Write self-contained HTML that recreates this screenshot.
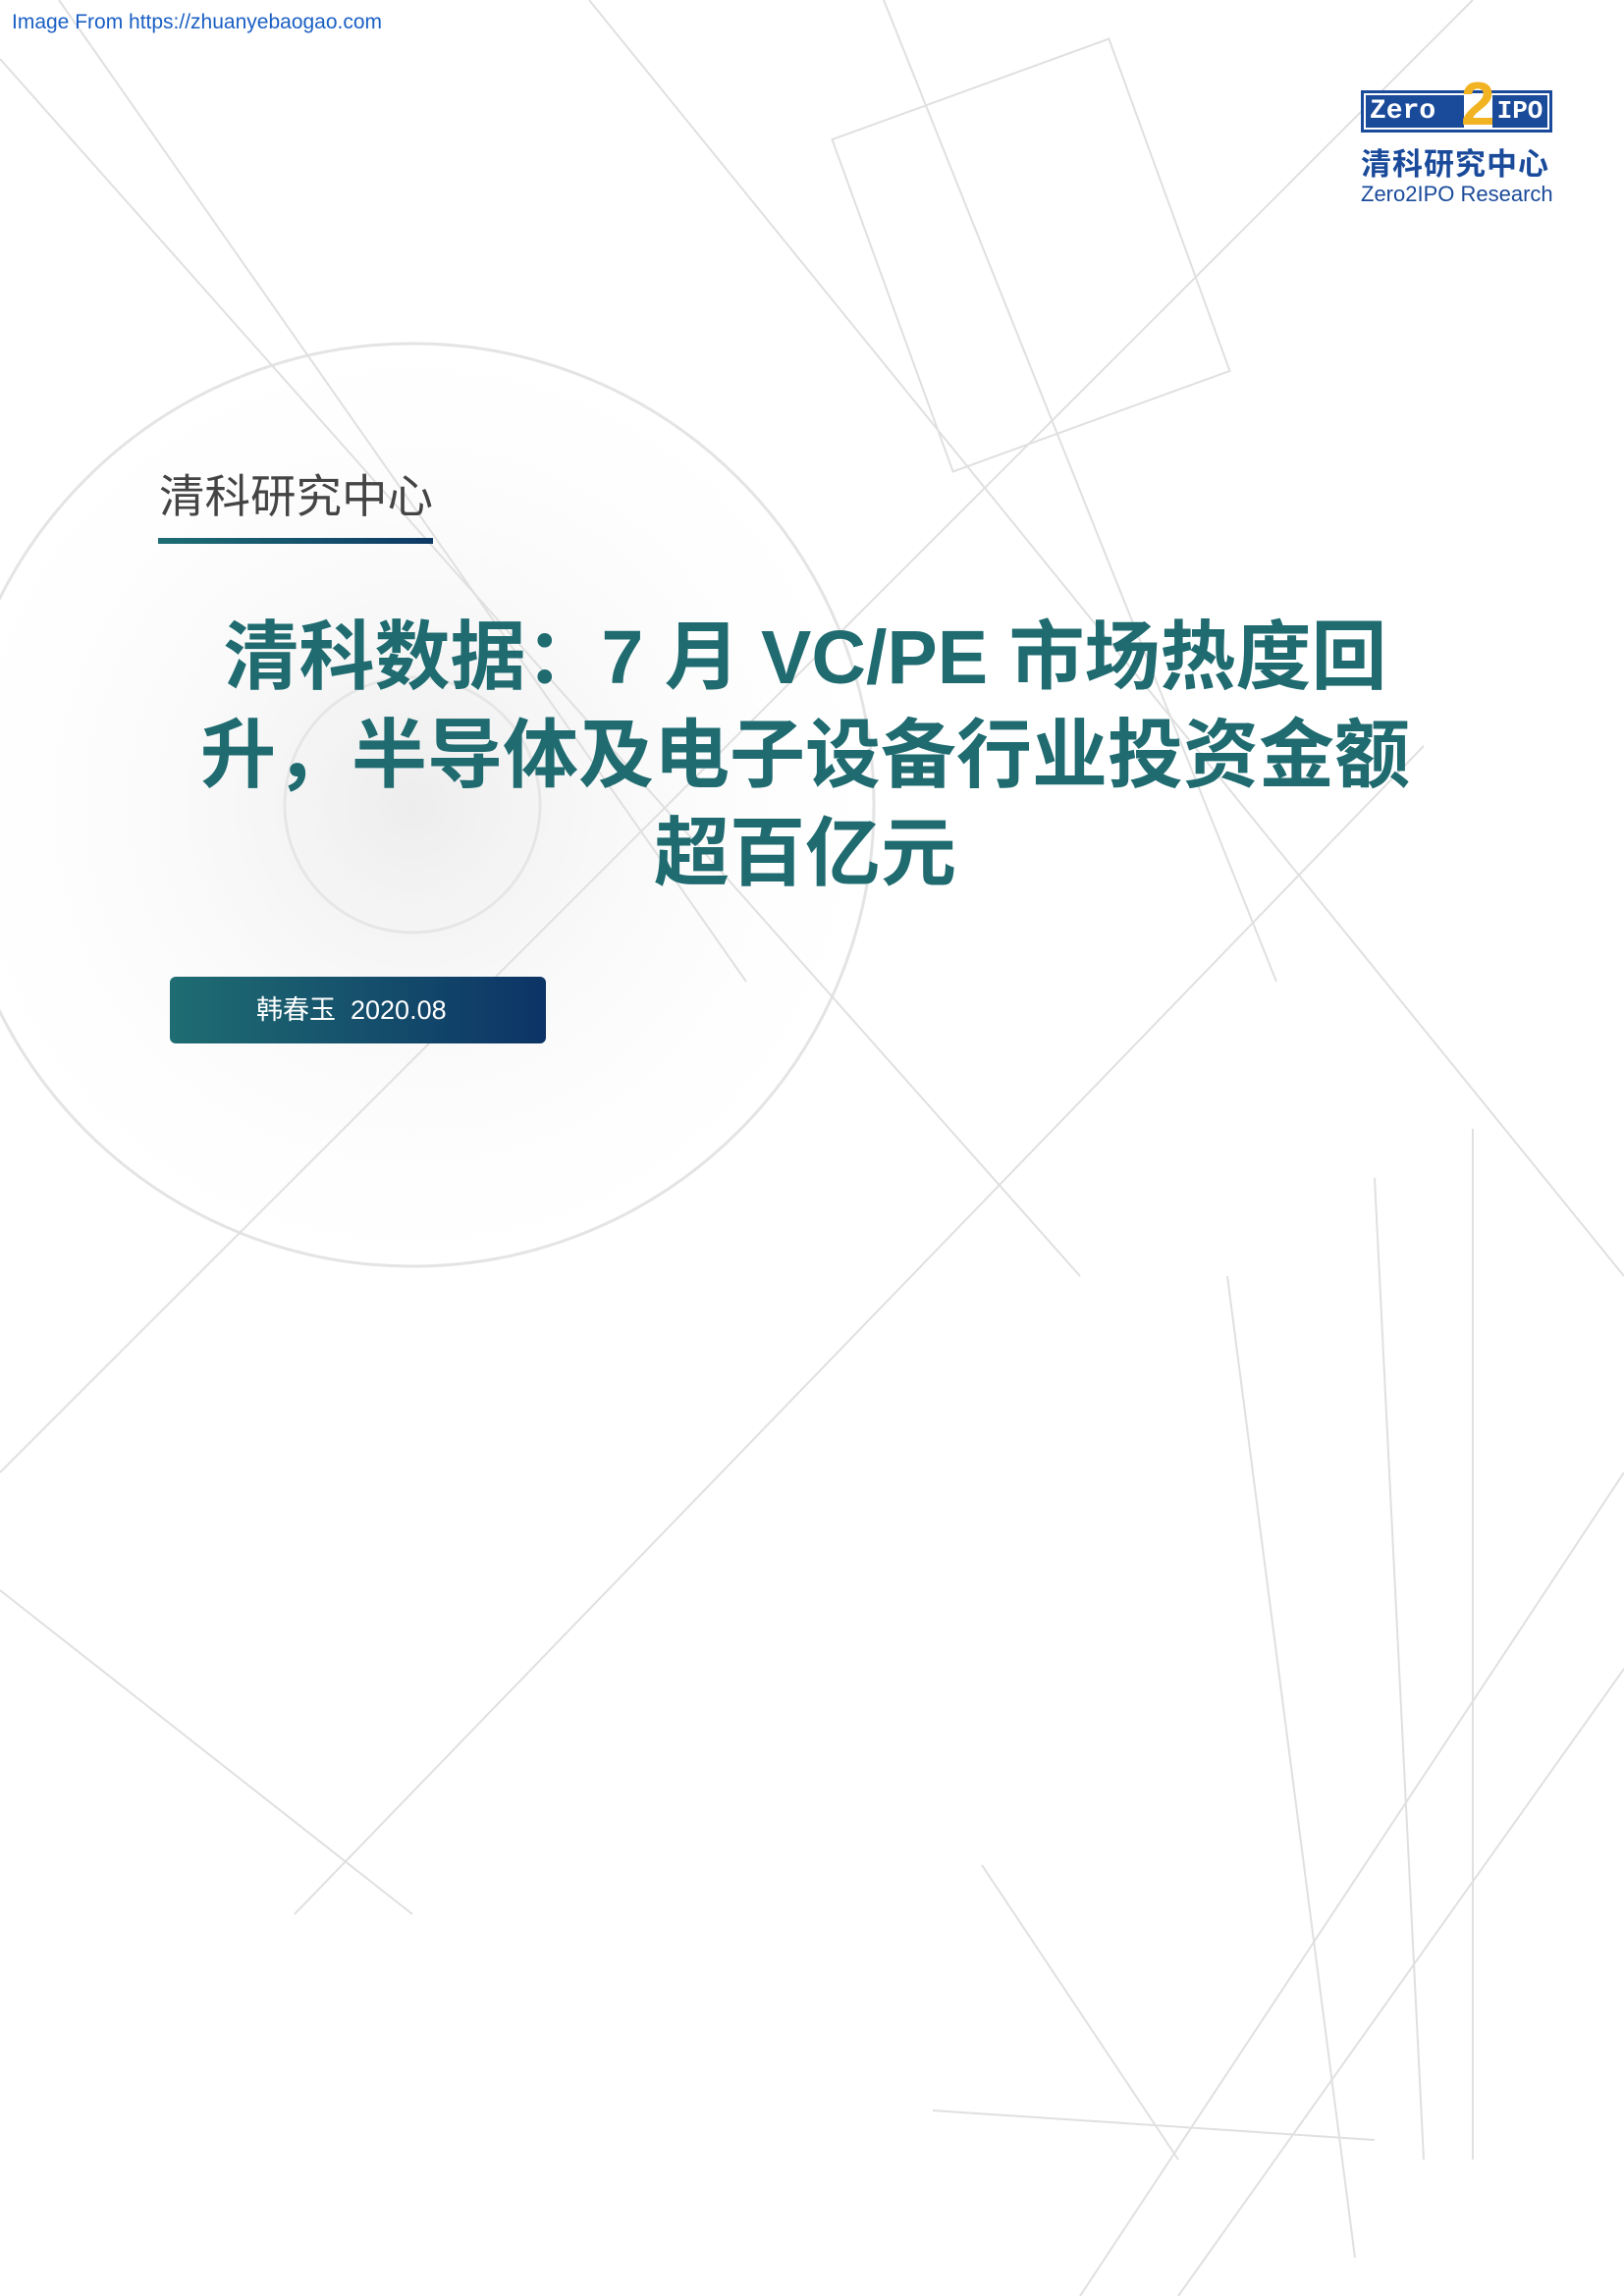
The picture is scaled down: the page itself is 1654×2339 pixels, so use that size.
<!DOCTYPE html>
<html><head><meta charset="utf-8">
<style>
html,body{margin:0;padding:0;}
body{width:1654px;height:2339px;position:relative;overflow:hidden;background:#fff;font-family:"Liberation Sans","Noto Sans CJK SC",sans-serif;}
.a{position:absolute;}
</style></head><body>
<svg class="a" style="left:0;top:0" width="1654" height="2339" viewBox="0 0 1654 2339">
<defs><radialGradient id="g" cx="0.5" cy="0.5" r="0.5"><stop offset="0" stop-color="#ededed"/><stop offset="1" stop-color="#fff" stop-opacity="0"/></radialGradient></defs>
<circle cx="420" cy="820" r="520" fill="url(#g)"/>
<circle cx="420" cy="820" r="470" fill="none" stroke="#e4e4e4" stroke-width="3"/>
<circle cx="420" cy="820" r="130" fill="none" stroke="#e6e6e6" stroke-width="3"/>
<g stroke="#e0e0e0" stroke-width="2" fill="none">
<line x1="0" y1="60" x2="1100" y2="1300"/>
<line x1="60" y1="0" x2="760" y2="1000"/>
<line x1="0" y1="1500" x2="1500" y2="0"/>
<line x1="300" y1="1950" x2="1450" y2="760"/>
<line x1="600" y1="0" x2="1654" y2="1300"/>
<line x1="0" y1="1620" x2="420" y2="1950"/>
<line x1="900" y1="0" x2="1300" y2="1000"/>
<line x1="1100" y1="2339" x2="1654" y2="1500"/>
<line x1="1200" y1="2339" x2="1654" y2="1700"/>
<line x1="950" y1="2150" x2="1400" y2="2180"/>
<line x1="1000" y1="1900" x2="1200" y2="2200"/>
<line x1="1250" y1="1300" x2="1380" y2="2300"/>
<line x1="1400" y1="1200" x2="1450" y2="2200"/>
<line x1="1500" y1="1150" x2="1500" y2="2200"/>
<rect x="900" y="80" width="300" height="360" transform="rotate(-20 1050 260)"/>
</g>
</svg>
<div class="a" style="left:12px;top:11px;font-size:21px;color:#1a5fc4;">Image From https://zhuanyebaogao.com</div>

<div class="a" style="left:1386px;top:92px;width:195px;height:43px;border:3px solid #1a4a9a;box-sizing:border-box;background:#fff;"></div>
<div class="a" style="left:1391px;top:97px;width:100px;height:33px;background:#1a4a9a;color:#fff;font:bold 28px 'Liberation Mono',monospace;line-height:33px;padding-left:4px;box-sizing:border-box;">Zero</div>
<div class="a" style="left:1488px;top:74px;color:#f2b322;font:bold 62px 'Liberation Sans',sans-serif;line-height:66px;">2</div>
<div class="a" style="left:1520px;top:97px;width:56px;height:33px;background:#1a4a9a;color:#fff;font:bold 26px 'Liberation Mono',monospace;line-height:33px;text-align:center;">IPO</div>
<div class="a" style="left:1386px;top:150px;font-weight:bold;font-size:31px;color:#1a4a9a;letter-spacing:1px;line-height:36px;">清科研究中心</div>
<div class="a" style="left:1386px;top:185px;font-size:22px;color:#1a4a9a;line-height:26px;">Zero2IPO Research</div>

<div class="a" style="left:162px;top:478px;font-size:46.5px;color:#444;line-height:56px;">清科研究中心</div>
<div class="a" style="left:161px;top:548px;width:280px;height:6px;background:linear-gradient(90deg,#1d6e74,#0e3a66);"></div>

<div class="a" style="left:120px;top:620px;width:1400px;text-align:center;font-weight:bold;font-size:77px;line-height:100px;color:#1f6b70;">清科数据：7 月 VC/PE 市场热度回<br>升，半导体及电子设备行业投资金额<br>超百亿元</div>

<div class="a" style="left:173px;top:995px;width:383px;height:68px;border-radius:6px;background:linear-gradient(90deg,#1f6d72,#0c3466);color:#fff;font-size:27px;line-height:68px;box-sizing:border-box;padding-left:88px;">韩春玉&nbsp; 2020.08</div>
</body></html>
